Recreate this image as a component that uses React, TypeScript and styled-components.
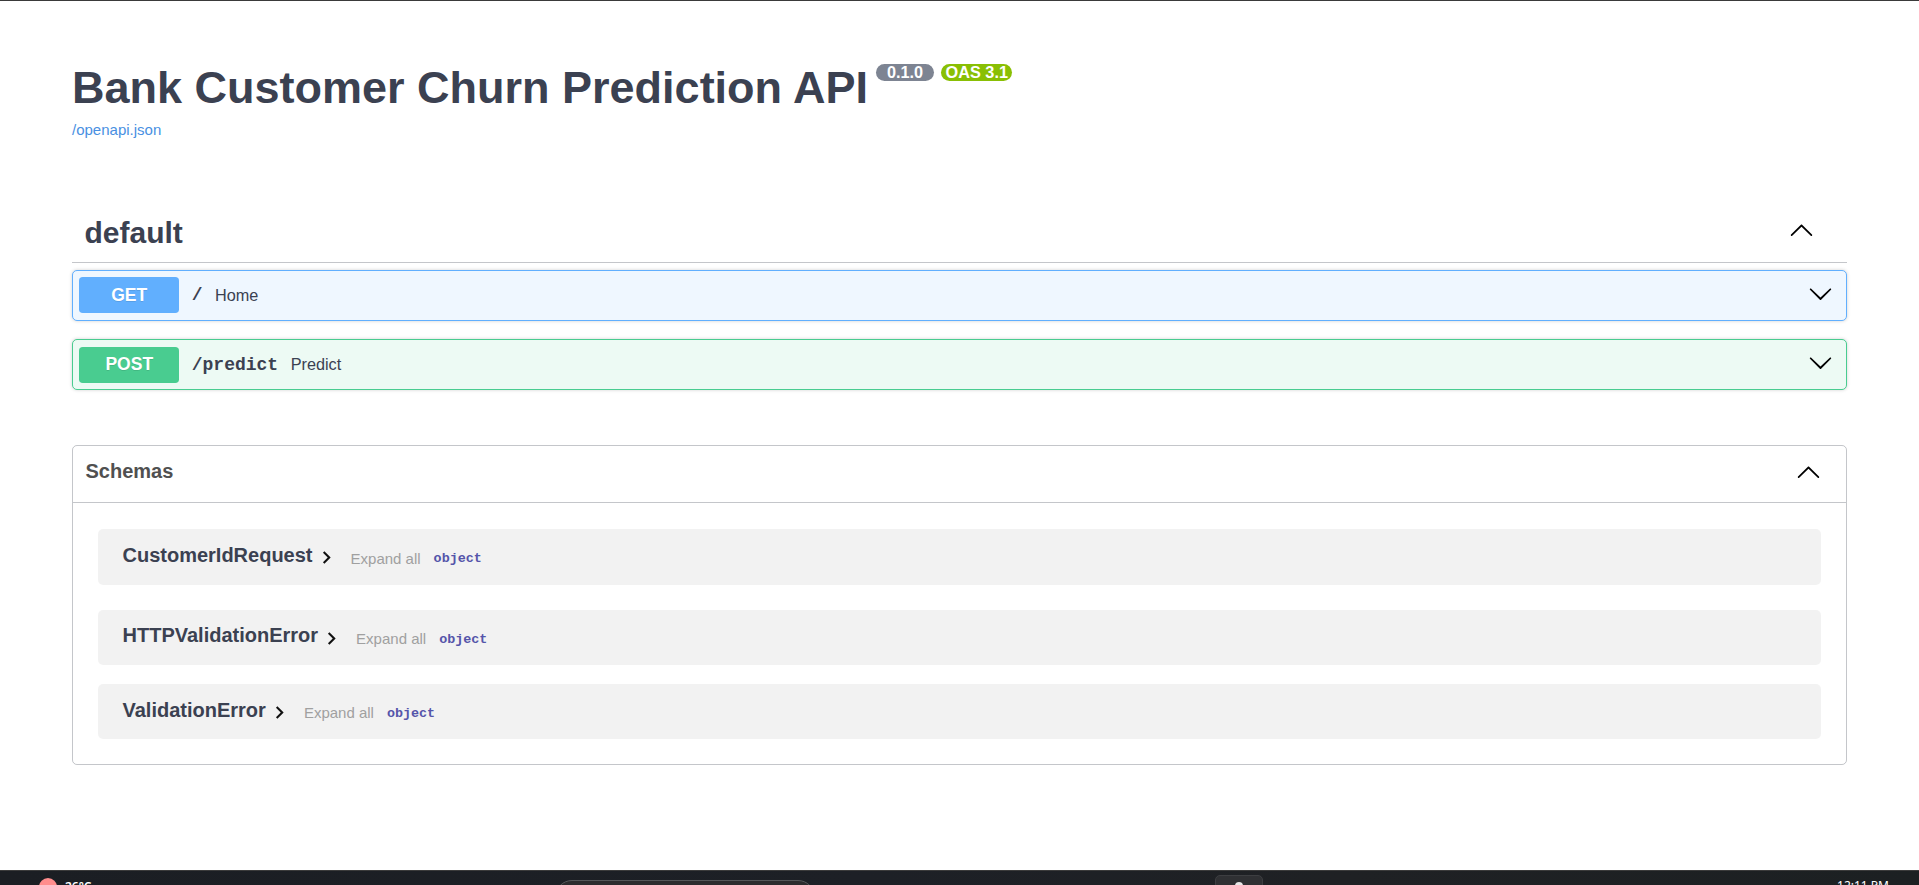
import React from "react";
import styled, { createGlobalStyle } from "styled-components";

const GlobalStyle = createGlobalStyle`
  html, body { margin: 0; padding: 0; background: #ffffff; }
  body { font-family: "Liberation Sans", Arial, sans-serif; overflow: hidden; }
  * { box-sizing: border-box; }
`;

const Page = styled.div`
  height: 100vh;
  display: flex;
  flex-direction: column;
  border-top: 1px solid #3a3a3a;
`;

const Main = styled.main`
  flex: 1;
  overflow: hidden;
`;

const Wrapper = styled.div`
  max-width: 1825px;
  margin: 0 auto;
  padding: 0 25px;
`;

const Info = styled.div`
  padding-top: 61px;
`;

const Title = styled.h2`
  display: flex;
  align-items: flex-start;
  margin: 0;
  font-size: 45px;
  line-height: 52px;
  font-weight: 700;
  color: #3b4151;
`;

const Badge = styled.small<{ $bg: string; $pad: number; $ml: number }>`
  display: inline-block;
  margin: 2.3px 0 0 ${(p) => p.$ml}px;
  height: 17px;
  padding: 0 ${(p) => p.$pad}px;
  border-radius: 57px;
  background: ${(p) => p.$bg};
  color: #ffffff;
  font-size: 16.25px;
  line-height: 17px;
  font-weight: 700;
  white-space: pre;
`;

const SpecLink = styled.a`
  display: block;
  margin-top: 6.5px;
  font-size: 15px;
  line-height: 17px;
  color: #4990e2;
  text-decoration: none;
`;

const TagSection = styled.section`
  margin-top: 64.5px;
`;

const TagHeader = styled.h3`
  display: flex;
  align-items: center;
  justify-content: space-between;
  margin: 0;
  padding: 12.5px 25px 12.5px 12.5px;
  border-bottom: 1px solid rgba(59, 65, 81, 0.3);
  font-size: 30px;
  line-height: 35px;
  font-weight: 700;
  color: #3b4151;
`;

const ArrowIcon = styled.svg<{ $mr?: number; $mb?: number; $mt?: number }>`
  width: 25px;
  height: 25px;
  flex: none;
  fill: #000000;
  margin-right: ${(p) => p.$mr ?? 0}px;
  margin-bottom: ${(p) => p.$mb ?? 0}px;
  margin-top: ${(p) => p.$mt ?? 0}px;
`;

const OpList = styled.div`
  display: flow-root;
  padding-top: 7px;
`;

const OpRow = styled.div<{ $color: string; $bg: string }>`
  display: flex;
  align-items: center;
  padding: 6.25px;
  border: 1px solid ${(p) => p.$color};
  border-radius: 5px;
  background: ${(p) => p.$bg};
  box-shadow: 0 0 3.75px rgba(0, 0, 0, 0.19);
  margin-bottom: 18.75px;
`;

const Method = styled.span<{ $color: string }>`
  width: 100px;
  padding: 7.5px 0;
  text-align: center;
  font-size: 17.5px;
  line-height: 21px;
  font-weight: 700;
  color: #ffffff;
  background: ${(p) => p.$color};
  border-radius: 3.75px;
  text-shadow: 0 1px 0 rgba(0, 0, 0, 0.1);
`;

const OpPath = styled.span`
  padding: 0 12.5px;
  font-family: "Liberation Mono", monospace;
  font-size: 18px;
  font-weight: 700;
  color: #3b4151;
`;

const OpDesc = styled.span`
  flex: 1;
  font-size: 16.25px;
  color: #3b4151;
`;

const Models = styled.section`
  margin-top: 36.5px;
  border: 1px solid rgba(59, 65, 81, 0.3);
  border-radius: 5px;
`;

const ModelsHeader = styled.h4`
  display: flex;
  align-items: flex-start;
  justify-content: space-between;
  height: 57px;
  margin: 0;
  padding: 14px 25px 0 12.5px;
  border-bottom: 1px solid rgba(59, 65, 81, 0.3);
  font-size: 20px;
  line-height: 23px;
  font-weight: 700;
  color: #505050;
`;

const ModelList = styled.div`
  padding: 26px 25px 25px;
`;

const ModelRow = styled.div`
  display: flex;
  align-items: center;
  height: 55.5px;
  padding-left: 24.5px;
  background: rgba(0, 0, 0, 0.05);
  border-radius: 5px;
  margin-bottom: 18.75px;
  &:first-child { margin-bottom: 25px; }
  &:last-child { margin-bottom: 0; }
`;

const ModelTitle = styled.span`
  font-size: 20px;
  line-height: 23px;
  font-weight: 700;
  color: #3b4151;
  margin-bottom: 2.8px;
`;

const Toggle = styled.svg`
  width: 25px;
  height: 25px;
  margin: 1.9px 0 0 1px;
  fill: #111111;
`;

const ExpandAll = styled.span`
  margin: 2.7px 0 0 12px;
  font-size: 15px;
  color: #a0a0a0;
`;

const PropType = styled.span`
  margin: 4px 0 0 13px;
  font-family: "Liberation Mono", monospace;
  font-size: 13.4px;
  font-weight: 700;
  color: #55a;
`;

const Taskbar = styled.footer`
  height: 15px;
  flex: none;
  overflow: hidden;
  display: flex;
  align-items: flex-start;
  padding-left: 39px;
  background: linear-gradient(90deg, #1b1e23 0%, #1d2026 45%, #1f2124 70%, #1c2022 100%);
  border-top: 1px solid #3b3b3b;
`;

const Weather = styled.div`
  width: 516px;
  display: flex;
  align-items: flex-start;
  gap: 8px;
  padding-top: 7px;
  color: #ffffff;
  font-family: "Segoe UI", "Noto Sans", sans-serif;
  font-size: 12px;
  font-weight: 600;
  line-height: 14px;
`;

const Sun = styled.span`
  width: 18px;
  height: 18px;
  border-radius: 50%;
  background: #ff8d8d;
`;

const WeatherText = styled.span`
  margin-top: 2px;
`;

const SearchBox = styled.div`
  width: 260px;
  height: 34px;
  margin-top: 9px;
  border-radius: 18px;
  background: #2c2c2e;
  border: 1px solid #555759;
`;

const AppIcon = styled.div`
  width: 48px;
  height: 40px;
  margin: 4px 0 0 400px;
  border-radius: 5px;
  background: #2f3033;
  border: 1px solid #3d3e41;
  display: flex;
  justify-content: center;
  padding-top: 6px;
`;

const AppDot = styled.span`
  width: 8px;
  height: 12px;
  border-radius: 4px;
  background: #e8e8e8;
`;

const Clock = styled.div`
  margin-left: auto;
  margin-top: 8px;
  padding-right: 30px;
  color: #ffffff;
  font-family: "Segoe UI", "Noto Sans", sans-serif;
  font-size: 12px;
  line-height: 14px;
`;

const ArrowDown = ({ mr, mb }: { mr?: number; mb?: number }) => (
  <ArrowIcon viewBox="0 0 20 20" $mr={mr} $mb={mb}>
    <path d="M17.418 6.109c.272-.268.709-.268.979 0s.271.701 0 .969l-7.908 7.83c-.27.268-.707.268-.979 0l-7.908-7.83c-.27-.268-.27-.701 0-.969.271-.268.709-.268.979 0L10 13.25l7.418-7.141z" />
  </ArrowIcon>
);

const ArrowUp = ({ mr, mb, mt }: { mr?: number; mb?: number; mt?: number }) => (
  <ArrowIcon viewBox="0 0 20 20" $mr={mr} $mb={mb} $mt={mt}>
    <path d="M17.418 14.908c.272.268.709.268.979 0s.271-.701 0-.969l-7.908-7.83c-.27-.268-.707-.268-.979 0l-7.908 7.83c-.27.268-.27.701 0 .969.271.268.709.268.979 0L10 7.767l7.418 7.141z" />
  </ArrowIcon>
);

const ops = [
  { method: "GET", path: "/", desc: "Home", color: "#61affe", bg: "#eff7ff" },
  { method: "POST", path: "/predict", desc: "Predict", color: "#49cc90", bg: "#edfaf4" },
];

const schemas = ["CustomerIdRequest", "HTTPValidationError", "ValidationError"];

export default function App() {
  return (
    <>
      <GlobalStyle />
      <Page>
        <Main>
          <Wrapper>
            <Info>
              <Title>
                <span>Bank Customer Churn Prediction API</span>
                <Badge $bg="#7d8492" $pad={6.5} $ml={8}>{" 0.1.0 "}</Badge>
                <Badge $bg="#89bf04" $pad={4.5} $ml={7}>OAS 3.1</Badge>
              </Title>
              <SpecLink href="#">/openapi.json</SpecLink>
            </Info>

            <TagSection>
              <TagHeader>
                <span>default</span>
                <ArrowUp mr={7.7} mb={5.2} />
              </TagHeader>
              <OpList>
                {ops.map((op) => (
                  <OpRow key={op.method} $color={op.color} $bg={op.bg}>
                    <Method $color={op.color}>{op.method}</Method>
                    <OpPath>{op.path}</OpPath>
                    <OpDesc>{op.desc}</OpDesc>
                    <ArrowDown mr={7.25} mb={3.6} />
                  </OpRow>
                ))}
              </OpList>
            </TagSection>

            <Models>
              <ModelsHeader>
                <span>Schemas</span>
                <ArrowUp mt={-1} />
              </ModelsHeader>
              <ModelList>
                {schemas.map((name) => (
                  <ModelRow key={name}>
                    <ModelTitle>{name}</ModelTitle>
                    <Toggle viewBox="0 0 24 24">
                      <path d="M10 6 8.59 7.41 13.17 12l-4.58 4.59L10 18l6-6z" />
                    </Toggle>
                    <ExpandAll>Expand all</ExpandAll>
                    <PropType>object</PropType>
                  </ModelRow>
                ))}
              </ModelList>
            </Models>
          </Wrapper>
        </Main>
        <Taskbar>
          <Weather>
            <Sun />
            <WeatherText>26°C</WeatherText>
          </Weather>
          <SearchBox />
          <AppIcon>
            <AppDot />
          </AppIcon>
          <Clock>12:11 PM</Clock>
        </Taskbar>
      </Page>
    </>
  );
}
